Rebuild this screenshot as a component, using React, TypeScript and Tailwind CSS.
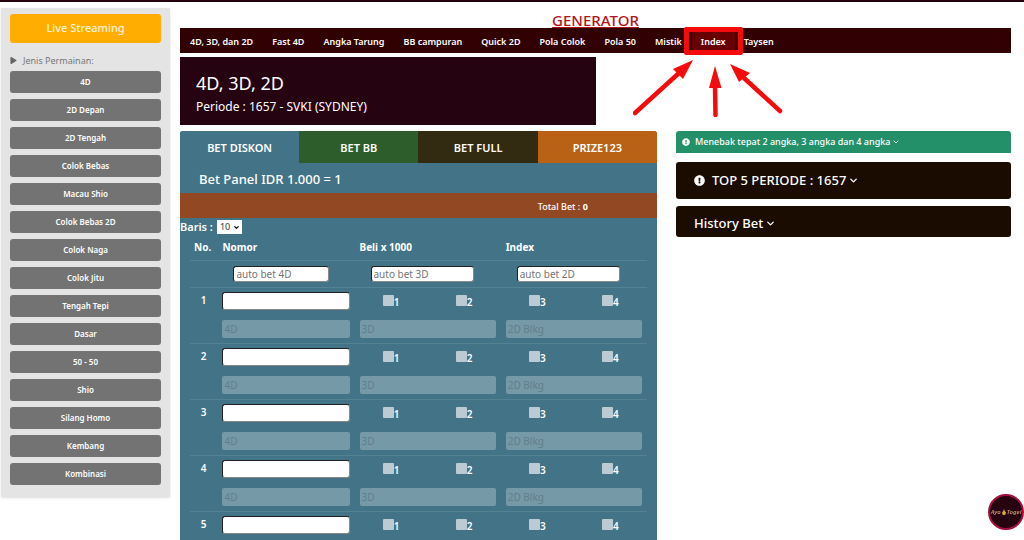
import React from 'react';
import { FaExclamationCircle, FaPlay } from 'react-icons/fa';
import { FiChevronDown } from 'react-icons/fi';

const games = [
  '4D',
  '2D Depan',
  '2D Tengah',
  'Colok Bebas',
  'Macau Shio',
  'Colok Bebas 2D',
  'Colok Naga',
  'Colok Jitu',
  'Tengah Tepi',
  'Dasar',
  '50 - 50',
  'Shio',
  'Silang Homo',
  'Kembang',
  'Kombinasi',
];

const navBefore = [
  '4D, 3D, dan 2D',
  'Fast 4D',
  'Angka Tarung',
  'BB campuran',
  'Quick 2D',
  'Pola Colok',
  'Pola 50',
  'Mistik',
];

const tabs = [
  { label: 'BET DISKON', color: 'bg-[#437387]' },
  { label: 'BET BB', color: 'bg-[#2c5d2b]' },
  { label: 'BET FULL', color: 'bg-[#322b12]' },
  { label: 'PRIZE123', color: 'bg-[#b96216]' },
];

const rows = [1, 2, 3, 4, 5];

const fieldClass =
  'block rounded-[3px] border border-t-[#222] border-l-[#222] border-r-[#888] border-b-[#888] bg-white text-gray-700 outline-none placeholder:text-[#757575]';

const disabledClass = 'block h-[18px] w-full rounded-[2px] bg-[#7699a8] px-0.5 placeholder:text-[#5f7f8c]';

function Sidebar() {
  return (
    <aside className="ml-px w-[169px] shrink-0 self-start bg-[#e4e4e4] px-[9px] pt-1.5 pb-3 shadow-sm">
      <button className="block h-[29px] w-full rounded-[3px] bg-[#ffad00] text-[11px] font-medium text-[#fff3d6]">
        Live Streaming
      </button>
      <div className="flex h-7 items-end gap-1.5 pb-1 text-[9px] leading-[13px] text-[#777]">
        <FaPlay className="mb-[3px] size-[7px] text-[#666]" />
        Jenis Permainan:
      </div>
      <div className="flex flex-col gap-1.5">
        {games.map((game) => (
          <button key={game} className="h-[22px] rounded-[3px] bg-[#737373] text-[8px] font-semibold text-white">
            {game}
          </button>
        ))}
      </div>
    </aside>
  );
}

function Arrows() {
  return (
    <svg
      className="pointer-events-none absolute top-full left-1/2 -translate-x-1/2"
      width="160"
      height="64"
      viewBox="0 0 160 64"
      fill="#f40c0c"
      stroke="#f40c0c"
      strokeLinecap="round"
    >
      <path d="M2 60L46 20" strokeWidth="4.5" />
      <path d="M60 7L40 16L50 26Z" stroke="none" />
      <path d="M82.500 62L82 32" strokeWidth="4.5" />
      <path d="M82 13L76 35H88.500Z" stroke="none" />
      <path d="M147 58L111 25" strokeWidth="4.5" />
      <path d="M97 11L106 29L117 20Z" stroke="none" />
    </svg>
  );
}

function NavBar() {
  return (
    <nav className="flex h-[25px] items-stretch bg-[#300002] pl-px text-[9px] font-semibold text-white">
      {navBefore.map((item) => (
        <a key={item} href="#" className="flex items-center pt-0.5 pr-2.5 pl-[9px] whitespace-nowrap">
          {item}
        </a>
      ))}
      <div className="relative flex">
        <a href="#" className="flex items-center bg-[#680003] px-[9px] pt-0.5">
          Index
        </a>
        <span className="pointer-events-none absolute -inset-x-2 -top-px -bottom-0.5 rounded-[2px] border-[5px] border-[#f40c0c]" />
        <Arrows />
      </div>
      <a href="#" className="flex items-center px-[9px] pt-0.5">
        Taysen
      </a>
    </nav>
  );
}

function BetTable() {
  return (
    <table className="w-full table-fixed text-[10px] text-white">
      <colgroup>
        <col className="w-[6%]" />
        <col className="w-[30%]" />
        <col className="w-[16%]" />
        <col className="w-[16%]" />
        <col className="w-[16%]" />
        <col className="w-[16%]" />
      </colgroup>
      <thead>
        <tr className="h-6 border-b border-[#548295]">
          <th className="px-1 text-left">No.</th>
          <th className="px-[5px] text-left">Nomor</th>
          <th colSpan={2} className="px-[5px] text-left">
            Beli x 1000
          </th>
          <th colSpan={2} className="px-[5px] text-left">
            Index
          </th>
        </tr>
      </thead>
      <tbody>
        <tr className="h-[27px] border-y border-[#548295]">
          <td />
          <td className="px-4">
            <input aria-label="auto bet 4D" placeholder="auto bet 4D" className={`${fieldClass} h-4 w-24 px-0.5`} />
          </td>
          <td colSpan={2} className="px-4">
            <input aria-label="auto bet 3D" placeholder="auto bet 3D" className={`${fieldClass} h-4 w-[103px] px-0.5`} />
          </td>
          <td colSpan={2} className="px-4">
            <input aria-label="auto bet 2D" placeholder="auto bet 2D" className={`${fieldClass} h-4 w-[103px] px-0.5`} />
          </td>
        </tr>
        {rows.map((row) => (
          <React.Fragment key={row}>
            <tr className="h-7">
              <td className="pb-0.5 text-center font-semibold">{row}</td>
              <td className="px-[5px]">
                <input aria-label={`Nomor ${row}`} className={`${fieldClass} h-[18px] w-full px-0.5`} />
              </td>
              {[1, 2, 3, 4].map((n) => (
                <td key={n} className="pb-0.5">
                  <label className="flex items-center justify-center font-semibold">
                    <input type="checkbox" className="size-[11px] appearance-none rounded-[1px] bg-[#bccbd3]" />
                    <span className="pt-1 leading-3">{n}</span>
                  </label>
                </td>
              ))}
            </tr>
            <tr className="h-7 border-b border-[#548295]">
              <td />
              <td className="px-[5px]">
                <input disabled aria-label={`4D ${row}`} placeholder="4D" className={disabledClass} />
              </td>
              <td colSpan={2} className="px-[5px]">
                <input disabled aria-label={`3D ${row}`} placeholder="3D" className={disabledClass} />
              </td>
              <td colSpan={2} className="px-[5px]">
                <input disabled aria-label={`2D Blkg ${row}`} placeholder="2D Blkg" className={disabledClass} />
              </td>
            </tr>
          </React.Fragment>
        ))}
      </tbody>
    </table>
  );
}

function BetPanel() {
  return (
    <section className="w-[57.4%] overflow-hidden rounded-t-[3px] bg-[#437387] text-white">
      <div className="grid h-8 grid-cols-4 text-[11px] font-semibold">
        {tabs.map((tab) => (
          <button key={tab.label} className={`${tab.color} pt-0.5`}>
            {tab.label}
          </button>
        ))}
      </div>
      <h2 className="flex h-[30px] items-center px-[19px] pt-1 text-[13px] font-medium">Bet Panel IDR 1.000 = 1</h2>
      <div className="flex h-[25px] items-center bg-[#924823] text-[9px] font-medium">
        <span className="ml-[75%] pt-0.5">
          Total Bet : <b>0</b>
        </span>
      </div>
      <div className="flex h-[18px] items-center gap-1 text-[11px] font-semibold">
        <label htmlFor="baris">Baris :</label>
        <span className="relative flex">
          <select id="baris" defaultValue="10" className="h-3.5 w-[25px] appearance-none bg-white pl-[3px] text-[9px] font-normal text-[#333]">
            <option>10</option>
            <option>20</option>
            <option>50</option>
          </select>
          <FiChevronDown strokeWidth={4} className="pointer-events-none absolute top-1 right-0.5 size-[7px] text-black" />
        </span>
      </div>
      <div className="px-2.5">
        <BetTable />
      </div>
    </section>
  );
}

function InfoColumn() {
  return (
    <aside className="flex-1 font-medium text-white">
      <button className="flex h-[22px] w-full items-center rounded-t-[3px] bg-[#23906a] px-1.5 text-[9px]">
        <FaExclamationCircle className="mr-[5px] size-2" />
        Menebak tepat 2 angka, 3 angka dan 4 angka
        <FiChevronDown strokeWidth={3} className="ml-0.5 size-2" />
      </button>
      <button className="mt-[9px] flex h-[37px] w-full items-center rounded-[3px] bg-[#1a0c00] px-[18px] text-[13px]">
        <FaExclamationCircle className="mr-[7px] size-[11px]" />
        TOP 5 PERIODE : 1657
        <FiChevronDown strokeWidth={3} className="ml-0.5 size-[11px]" />
      </button>
      <button className="mt-[7px] flex h-[31px] w-full items-center rounded-[3px] bg-[#1a0c00] px-[18px] pt-1 text-[13px]">
        History Bet
        <FiChevronDown strokeWidth={3} className="ml-0.5 size-[11px]" />
      </button>
    </aside>
  );
}

function App() {
  return (
    <div className="h-screen overflow-hidden bg-white font-['Noto_Sans',sans-serif]">
      <div className="h-0.5 bg-[#23030f]" />
      <div className="flex pt-1.5 pr-[13px]">
        <Sidebar />
        <main className="ml-2.5 min-w-0 flex-1">
          <h1 className="h-5 text-center text-[15px] leading-6 font-medium text-[#b3141b] underline">GENERATOR</h1>
          <NavBar />
          <header className="mt-1 h-[68px] w-1/2 bg-[#260311] px-4 pt-3.5 text-white">
            <h2 className="text-[18px] leading-6">4D, 3D, 2D</h2>
            <p className="text-[12px] leading-6">Periode : 1657 - SVKI (SYDNEY)</p>
          </header>
          <div className="mt-1.5 flex items-start gap-[19px]">
            <BetPanel />
            <InfoColumn />
          </div>
        </main>
      </div>
      <a
        href="#"
        className="fixed right-0 bottom-2.5 flex size-9 items-center justify-center rounded-full border-2 border-[#a60d3a] bg-[#250310] text-[6px] font-semibold text-[#c79a72] italic"
      >
        Ayo
        <svg className="size-1.5" viewBox="0 0 6 8" fill="#e0a23c">
          <path d="M3 0L4 2.500Q6 4 5.500 6Q5 8 3 8Q1 8 0.500 6Q0 4 2 2.500Z" />
        </svg>
        Togel
      </a>
    </div>
  );
}

export default App;
